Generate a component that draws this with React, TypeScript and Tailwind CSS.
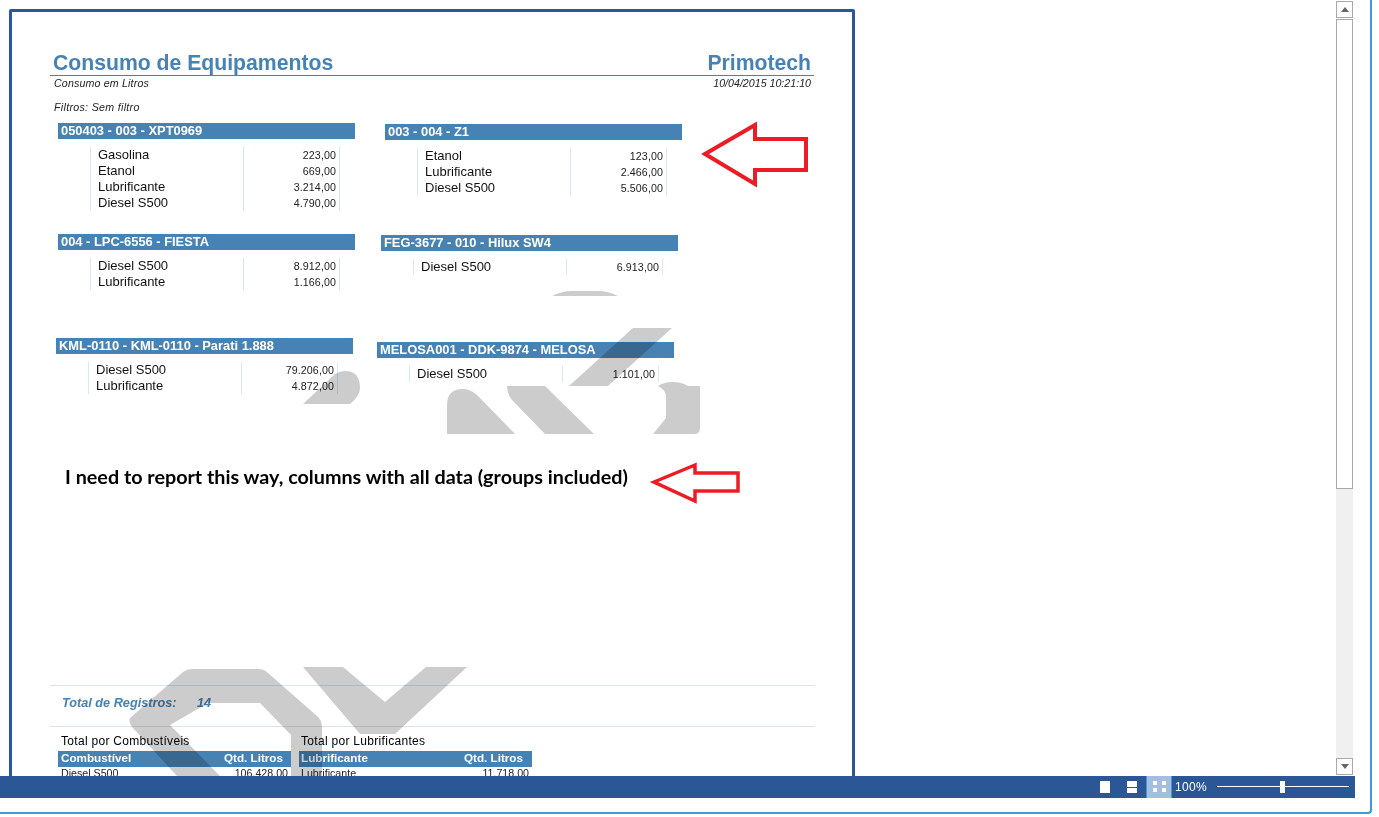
const groups = {
  xpt: [["Gasolina", "223,00"], ["Etanol", "669,00"], ["Lubrificante", "3.214,00"], ["Diesel S500", "4.790,00"]],
  z1: [["Etanol", "123,00"], ["Lubrificante", "2.466,00"], ["Diesel S500", "5.506,00"]],
  fiesta: [["Diesel S500", "8.912,00"], ["Lubrificante", "1.166,00"]],
  hilux: [["Diesel S500", "6.913,00"]],
  parati: [["Diesel S500", "79.206,00"], ["Lubrificante", "4.872,00"]],
  melosa: [["Diesel S500", "1.101,00"]],
};

function ReportGroup({ title, rows, className }: { title: string; rows: string[][]; className: string }) {
  return (
    <div className={`w-[297px] ${className}`}>
      <div className="h-4 bg-[#4682b4] pl-[3px] text-[12.9px] leading-4 font-bold text-white">{title}</div>
      <div className="mt-2 ml-8 pb-px">
        {rows.map(([name, value]) => (
          <div key={name} className="flex h-4 leading-4">
            <div className="w-[153px] border-l border-[#dce6f0] pl-[7px] text-[13px] text-[#111]">{name}</div>
            <div className="w-[97px] border-x border-[#dce6f0] pr-[3px] text-right text-[10.67px] tracking-[0.1px] text-[#222]">{value}</div>
          </div>
        ))}
      </div>
    </div>
  );
}

function TotalTable({ title, head, label, value, headPad, rowPad }: { title: string; head: string; label: string; value: string; headPad: string; rowPad: string }) {
  return (
    <div className="w-[233px]">
      <div className={`mb-[3px] text-[12px] leading-[13px] tracking-[0.3px] text-black ${rowPad}`}>{title}</div>
      <div className={`flex h-4 justify-between bg-[#4682b4] text-[11.7px] leading-[13px] font-bold text-white ${headPad}`}>
        <span>{head}</span>
        <span>Qtd. Litros</span>
      </div>
      <div className={`flex justify-between pr-[3px] text-[10.67px] leading-[13px] text-[#222] ${rowPad}`}>
        <span>{label}</span>
        <span>{value}</span>
      </div>
    </div>
  );
}

function Watermark() {
  return (
    <svg className="pointer-events-none absolute top-0 left-0 h-[776px] w-[1336px] mix-blend-multiply" viewBox="0 0 1336 776">
      <g fill="#cccccc">
        <path d="M552,296 Q562,291 572,291 H598 Q608,291 618,296 Z" />
        <path d="M633,328 H672 L608,386 H569 Z" />
        <path d="M447,434 V405 Q447,389 463,389 Q472,389 480,398 L515,434 Z" />
        <path d="M507,386 H545 L594,434 H545 L512,400 Q507,394 507,386 Z" />
        <path d="M658,386 Q664,382 672,382 Q682,382 688,386 H700 V428 Q700,434 694,434 H653 L666,418 V397 Q666,390 658,386 Z" />
        <path d="M303,404 L335,374 Q340,371 345,371 Q360,371 360,388 Q360,396 350,404 Z" />
        <path d="M130,718 L183,672 Q187,669 192,669 H258 Q264,669 268,673 L317,716 Q322,720 322,728 V776 H291 V735 L260,703 H208 L170,725 L220,776 H177 L133,728 Q128,722 130,718 Z" />
        <path d="M303,667 H343 L385,702 L426,667 H467 L395,734 H360 Z" />
      </g>
    </svg>
  );
}

function Arrows() {
  return (
    <svg className="pointer-events-none absolute top-0 left-0 h-[776px] w-[1336px]" viewBox="0 0 1336 776">
      <path d="M705,154 L755,125 V139 H806 V170 H755 V184 Z" fill="none" stroke="#ed1c24" strokeWidth="4" />
      <path d="M654,482 L695,465 V473 H738 V491 H695 V501 Z" fill="none" stroke="#ed1c24" strokeWidth="3.5" />
    </svg>
  );
}

export default function App() {
  return (
    <div className="h-[817px] w-[1379px] overflow-hidden bg-white font-['Liberation_Sans',Arial,sans-serif]">
      <div className="h-[814px] w-[1372px] rounded-br-[4px] border-r-2 border-b-2 border-[#3f9bd8]">
        <div className="w-[1355px]">
          <div className="flex h-[776px]">
            <div className="relative h-[776px] w-[1336px] overflow-hidden">
              <div className="mt-[9px] ml-[9px] h-[900px] w-[846px] rounded-t-[2px] border-[3px] border-[#2b5797] bg-white">
                <div className="mt-10 ml-[38px] flex h-[24px] w-[764px] items-end justify-between border-b border-[#4682b4] pr-[3px] pb-px pl-[3px] text-[21.2px] leading-[23px] font-bold text-[#4682b4]">
                  <span>Consumo de Equipamentos</span>
                  <span>Primotech</span>
                </div>
                <div className="ml-[38px] flex h-4 w-[764px] justify-between pr-[3px] pl-[4px] text-[10.67px] leading-[14px] text-[#222] italic">
                  <span className="tracking-[0.15px]">Consumo em Litros</span>
                  <span>10/04/2015 10:21:10</span>
                </div>
                <div className="mt-[7px] ml-[42px] h-4 text-[10.67px] leading-4 tracking-[0.3px] text-[#222] italic">Filtros: Sem filtro</div>

                <div className="mt-2 ml-[46px] flex items-start gap-[30px]">
                  <ReportGroup title="050403 - 003 - XPT0969" rows={groups.xpt} className="" />
                  <ReportGroup title="003 - 004 - Z1" rows={groups.z1} className="mt-px" />
                </div>
                <div className="mt-[22px] ml-[46px] flex items-start gap-[26px]">
                  <ReportGroup title="004 - LPC-6556 - FIESTA" rows={groups.fiesta} className="h-[57px]" />
                  <ReportGroup title="FEG-3677 - 010 - Hilux SW4" rows={groups.hilux} className="mt-px" />
                </div>
                <div className="mt-[47px] ml-[44px] flex items-start gap-6">
                  <ReportGroup title="KML-0110 - KML-0110 - Parati 1.888" rows={groups.parati} className="h-[57px]" />
                  <ReportGroup title="MELOSA001 - DDK-9874 - MELOSA" rows={groups.melosa} className="mt-1" />
                </div>

                <div className="mt-[70px] ml-[53px] h-[24px] font-['Lato',sans-serif] text-[19.75px] leading-[24px] font-bold text-black">
                  I need to report this way, columns with all data (groups included)
                </div>

                <div className="mt-[196px] ml-[38px] h-[42px] w-[765px] border-y border-[#d8e6f0] pl-3 text-[12.7px] leading-[34px] font-bold text-[#4682b4] italic">
                  <span className="inline-block w-[135px]">Total de Registros:</span>
                  <span>14</span>
                </div>
                <div className="mt-2 ml-[46px] flex items-start gap-2">
                  <TotalTable title="Total por Combustíveis" head="Combustível" label="Diesel S500" value="106.428,00" headPad="pr-2 pl-[3px]" rowPad="pl-[3px]" />
                  <TotalTable title="Total por Lubrificantes" head="Lubrificante" label="Lubrificante" value="11.718,00" headPad="pr-[9px] pl-[2px]" rowPad="pl-[2px]" />
                </div>
              </div>
              <Watermark />
              <Arrows />
            </div>

            <div className="flex w-[17px] flex-col pt-px">
              <div className="flex h-[17px] items-center justify-center border border-[#a9a9a9] bg-white">
                <div className="h-0 w-0 border-x-4 border-b-[5px] border-x-transparent border-b-[#666]" />
              </div>
              <div className="mt-px h-[470px] border border-[#a9a9a9] bg-white" />
              <div className="h-[269px] bg-[#f0f0f0]" />
              <div className="flex h-[17px] items-center justify-center border border-[#a9a9a9] bg-white">
                <div className="h-0 w-0 border-x-4 border-t-[5px] border-x-transparent border-t-[#666]" />
              </div>
            </div>
          </div>

          <div className="flex h-[22px] items-center justify-end bg-[#2b5797] pr-[6px]">
            <div className="mb-px h-3 w-[10px] bg-white" />
            <div className="mb-px ml-[17px] flex h-3 w-[10px] flex-col gap-px">
              <div className="h-[6px] bg-white" />
              <div className="h-[5px] bg-white" />
            </div>
            <div className="ml-[9px] grid h-[22px] w-[26px] grid-cols-[4px_4px] content-center justify-center gap-x-[5px] gap-y-[3px] border-x border-[#3f9bd8] bg-[#a4bde0] pb-px">
              <div className="h-1 bg-white" />
              <div className="h-1 bg-white" />
              <div className="h-1 bg-white" />
              <div className="h-1 bg-white" />
            </div>
            <span className="ml-[3px] w-[42px] text-[12px] tracking-[0.3px] text-white">100%</span>
            <div className="relative mb-px h-px w-[132px] bg-white">
              <div className="absolute top-[-5px] left-[63px] h-3 w-[5px] bg-white" />
            </div>
          </div>
        </div>
      </div>
    </div>
  );
}
